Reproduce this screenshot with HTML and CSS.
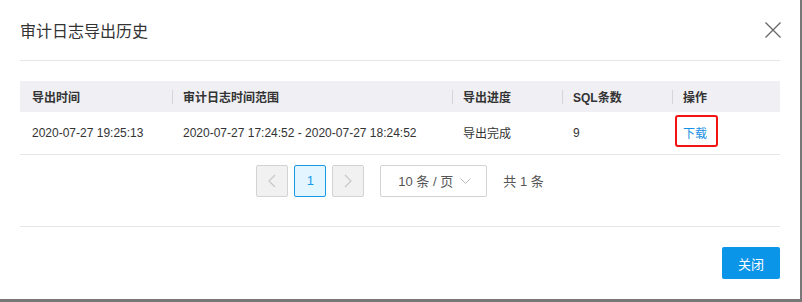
FILE: index.html
```html
<!DOCTYPE html>
<html lang="zh-CN">
<head>
    <meta charset="UTF-8">
    <title>审计日志导出历史</title>
    <link rel="stylesheet" href="styles.css">
</head>
<body>
    <div class="modal">
        <div class="modal-header">
            <span class="modal-title">审计日志导出历史</span>
            <span class="modal-close">
                <svg width="16" height="16" viewBox="0 0 16 16"><path d="M0.5 0.5 L15.5 15.5 M15.5 0.5 L0.5 15.5" stroke="#666" stroke-width="1.3" fill="none"/></svg>
            </span>
        </div>
        <div class="modal-body">
            <table class="log-table">
                <thead>
                    <tr>
                        <th class="col-time">导出时间</th>
                        <th class="col-range">审计日志时间范围</th>
                        <th class="col-status">导出进度</th>
                        <th class="col-count">SQL条数</th>
                        <th class="col-op">操作</th>
                    </tr>
                </thead>
                <tbody>
                    <tr>
                        <td>2020-07-27 19:25:13</td>
                        <td>2020-07-27 17:24:52 - 2020-07-27 18:24:52</td>
                        <td>导出完成</td>
                        <td>9</td>
                        <td class="op-cell"><a class="link" href="#">下载</a><span class="mark"></span></td>
                    </tr>
                </tbody>
            </table>
            <div class="pager">
                <span class="page-btn disabled">
                    <svg width="8" height="14" viewBox="0 0 8 14"><polyline points="7,1 1,7 7,13" stroke="#c8c8c8" stroke-width="1.2" fill="none"/></svg>
                </span>
                <span class="page-btn active">1</span>
                <span class="page-btn disabled">
                    <svg width="8" height="14" viewBox="0 0 8 14"><polyline points="1,1 7,7 1,13" stroke="#c8c8c8" stroke-width="1.2" fill="none"/></svg>
                </span>
                <span class="page-size">
                    <span>10 条 / 页</span>
                    <svg width="11" height="6" viewBox="0 0 11 6"><polyline points="0.5,0.5 5.5,5.5 10.5,0.5" stroke="#bbb" stroke-width="1" fill="none"/></svg>
                </span>
                <span class="page-total">共 1 条</span>
            </div>
        </div>
        <div class="modal-footer">
            <button class="btn-primary">关闭</button>
        </div>
    </div>
</body>
</html>
```
FILE: styles.css
```css
body {
    margin: 0;
    padding: 0;
    background-color: #777;
    font-family: "Liberation Sans", "Noto Sans CJK SC", sans-serif;
    color: #333;
}
.modal {
    width: 800px;
    height: 299px;
    background-color: #fff;
    box-sizing: border-box;
}
.modal-header {
    margin: 0 20px;
    height: 60px;
    border-bottom: 1px solid #e6e6e6;
    display: flex;
    align-items: center;
    justify-content: space-between;
}
.modal-title {
    font-size: 16px;
    color: #333;
}
.modal-close {
    display: flex;
    width: 16px;
    height: 16px;
    margin-right: -1px;
}
.modal-body {
    margin: 0 20px;
    padding-top: 20px;
    border-bottom: 1px solid #e6e6e6;
    height: 145px;
}
.log-table {
    width: 760px;
    border-collapse: collapse;
    table-layout: fixed;
    font-size: 12px;
}
.log-table th,
.log-table td {
    box-sizing: border-box;
}
.log-table th {
    height: 31px;
    padding: 0 0 0 11px;
    text-align: left;
    font-weight: bold;
    color: #333;
    background-color: #efeff4;
}
.log-table th + th {
    background-image: linear-gradient(#d6d6d6, #d6d6d6);
    background-repeat: no-repeat;
    background-size: 1px 14px;
    background-position: 0 center;
}
.log-table th:first-child,
.log-table td:first-child {
    padding-left: 12px;
}
.col-time { width: 152px; }
.col-range { width: 280px; }
.col-status { width: 110px; }
.col-count { width: 110px; }
.col-op { width: 108px; }
.log-table td {
    height: 42px;
    padding: 0 0 0 11px;
    color: #333;
    border-bottom: 1px solid #e6e6e6;
}
.op-cell {
    position: relative;
}
.link {
    color: #1890e6;
    text-decoration: none;
}
.mark {
    position: absolute;
    left: 3px;
    top: 3px;
    width: 43px;
    height: 32px;
    box-sizing: border-box;
    border: 2px solid #f31313;
    border-radius: 3px;
}
.pager {
    margin-top: 10px;
    display: flex;
    justify-content: center;
    align-items: center;
    font-size: 12px;
}
.page-btn {
    width: 32px;
    height: 32px;
    box-sizing: border-box;
    border: 1px solid #d3d3d3;
    border-radius: 2px;
    display: flex;
    align-items: center;
    justify-content: center;
    margin-right: 6px;
}
.page-btn.disabled {
    background-color: #f1f1f1;
}
.page-btn.active {
    background-color: #e3f5fe;
    border-color: #1799e6;
    color: #1799e6;
    font-size: 13px;
}
.page-size {
    margin-left: 10px;
    width: 107px;
    height: 32px;
    box-sizing: border-box;
    border: 1px solid #d3d3d3;
    border-radius: 2px;
    display: flex;
    align-items: center;
    padding: 0 15px 0 17px;
    justify-content: space-between;
    color: #555;
    font-size: 13px;
}
.page-total {
    margin-left: 16px;
    color: #555;
    font-size: 13px;
}
.modal-footer {
    margin: 0 20px;
    padding-top: 20px;
    display: flex;
    justify-content: flex-end;
}
.btn-primary {
    width: 58px;
    height: 32px;
    border: none;
    border-radius: 2px;
    background-color: #0b95e8;
    color: #fff;
    font-family: "Liberation Sans", "Noto Sans CJK SC", sans-serif;
    font-size: 13px;
    cursor: pointer;
}
```
